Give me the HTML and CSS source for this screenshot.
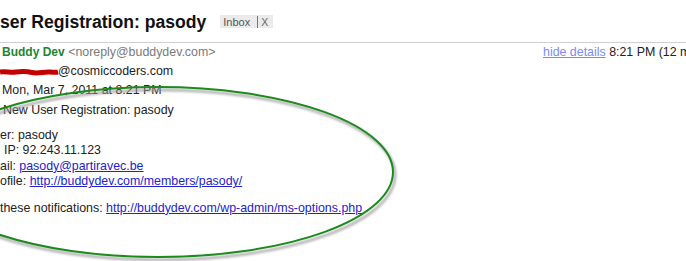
FILE: index.html
```html
<!DOCTYPE html>
<html lang="en">
<head>
<meta charset="utf-8">
<title>User Registration: pasody</title>
<link rel="stylesheet" href="styles.css">
</head>
<body>
<div class="page">
  <div class="subject-row">
    <h1 class="subject">ser Registration: pasody</h1>
    <span class="label"><span class="label-name">Inbox</span><span class="label-sep"></span><span class="label-x">X</span></span>
  </div>
  <div class="message">
    <div class="from-row">
      <div class="from"><b class="sender">Buddy Dev</b> <span class="addr">&lt;noreply@buddydev.com&gt;</span></div>
      <div class="meta"><a class="hide" href="#">hide details</a> 8:21 PM (12 minutes ago)</div>
    </div>
    <div class="details">
      <div class="line to"><svg class="redact" width="60" height="10" viewBox="0 0 60 10"><path d="M0 5 C6 4 10 6 16 5 S26 4 32 5.5 S44 4.5 50 5 S56 5.5 58 5" /></svg><span>@cosmiccoders.com</span></div>
      <div class="line">Mon, Mar 7, 2011 at 8:21 PM</div>
      <div class="line indent">New User Registration: pasody</div>
    </div>
    <div class="body">
      <div class="bline">er: pasody</div>
      <div class="bline ip">IP: 92.243.11.123</div>
      <div class="bline">ail: <a href="#">pasody@partiravec.be</a></div>
      <div class="bline">ofile: <a href="#">http://buddydev.com/members/pasody/</a></div>
      <div class="bline gap">these notifications: <a href="#">http://buddydev.com/wp-admin/ms-options.php</a></div>
    </div>
  </div>
  <svg class="annot" width="686" height="261" viewBox="0 0 686 261">
    <defs>
      <filter id="soft" x="-10%" y="-10%" width="120%" height="130%">
        <feGaussianBlur stdDeviation="1.2"/>
      </filter>
    </defs>
    <ellipse class="ring-shadow" cx="160" cy="175" rx="235" ry="85" filter="url(#soft)"/>
    <ellipse class="ring" cx="158" cy="172" rx="235" ry="85"/>
  </svg>
</div>
</body>
</html>
```
FILE: styles.css
```css
* { box-sizing: border-box; }
html, body {
  margin: 0;
  padding: 0;
  background: #fff;
}
body {
  width: 686px;
  height: 261px;
  overflow: hidden;
  font-family: "Liberation Sans", Arial, sans-serif;
  color: #222;
}
.page {
  position: relative;
  width: 686px;
  height: 261px;
  overflow: hidden;
}
.subject-row {
  display: flex;
  align-items: flex-start;
  gap: 14px;
  height: 43px;
  padding-top: 11px;
  border-bottom: 1px solid #cfcfcf;
}
.subject {
  margin: 0;
  font-size: 17.6px;
  line-height: 22px;
  font-weight: bold;
  color: #111;
  white-space: nowrap;
}
.label {
  display: flex;
  align-items: center;
  margin-top: 4px;
  height: 13px;
  padding: 0 5px 0 3px;
  background: #ebebeb;
  font-size: 11px;
  color: #555;
}
.label-sep {
  width: 1px;
  height: 12px;
  background: #777;
  margin: 0 3px 0 7px;
}
.label-x { color: #666; font-size: 10.5px; }

.message {
  font-size: 12.4px;
}
.from-row {
  display: flex;
  line-height: 19px;
  height: 19px;
}
.from {
  flex: 1;
  padding-left: 2px;
  white-space: nowrap;
}
.sender {
  color: #1f8430;
  font-size: 12px;
}
.addr { color: #7a7a7a; }
.meta {
  width: 143px;
  white-space: nowrap;
  overflow: hidden;
  color: #222;
}
.hide { color: #7b8cee; }

.details .line {
  height: 19.3px;
  line-height: 19.3px;
  padding-left: 2px;
  white-space: nowrap;
}
.details .to {
  display: flex;
  align-items: center;
  padding-left: 0;
}
.redact { display: block; margin-right: -2px; }
.redact path {
  fill: none;
  stroke: #c40000;
  stroke-width: 5;
  stroke-linecap: butt;
}
.details .indent { padding-left: 3px; }

.body {
  margin-top: 8px;
}
.bline {
  line-height: 15.5px;
  height: 15.5px;
  white-space: nowrap;
}
.bline.ip { padding-left: 4px; }
.bline.gap { margin-top: 11px; }
a { color: #2323cc; text-decoration: underline; }

.annot {
  position: absolute;
  left: 0;
  top: 0;
  pointer-events: none;
}
.ring {
  fill: none;
  stroke: #1e8a1e;
  stroke-width: 2;
}
.ring-shadow {
  fill: none;
  stroke: #999;
  stroke-width: 3;
  opacity: 0.7;
}
```
